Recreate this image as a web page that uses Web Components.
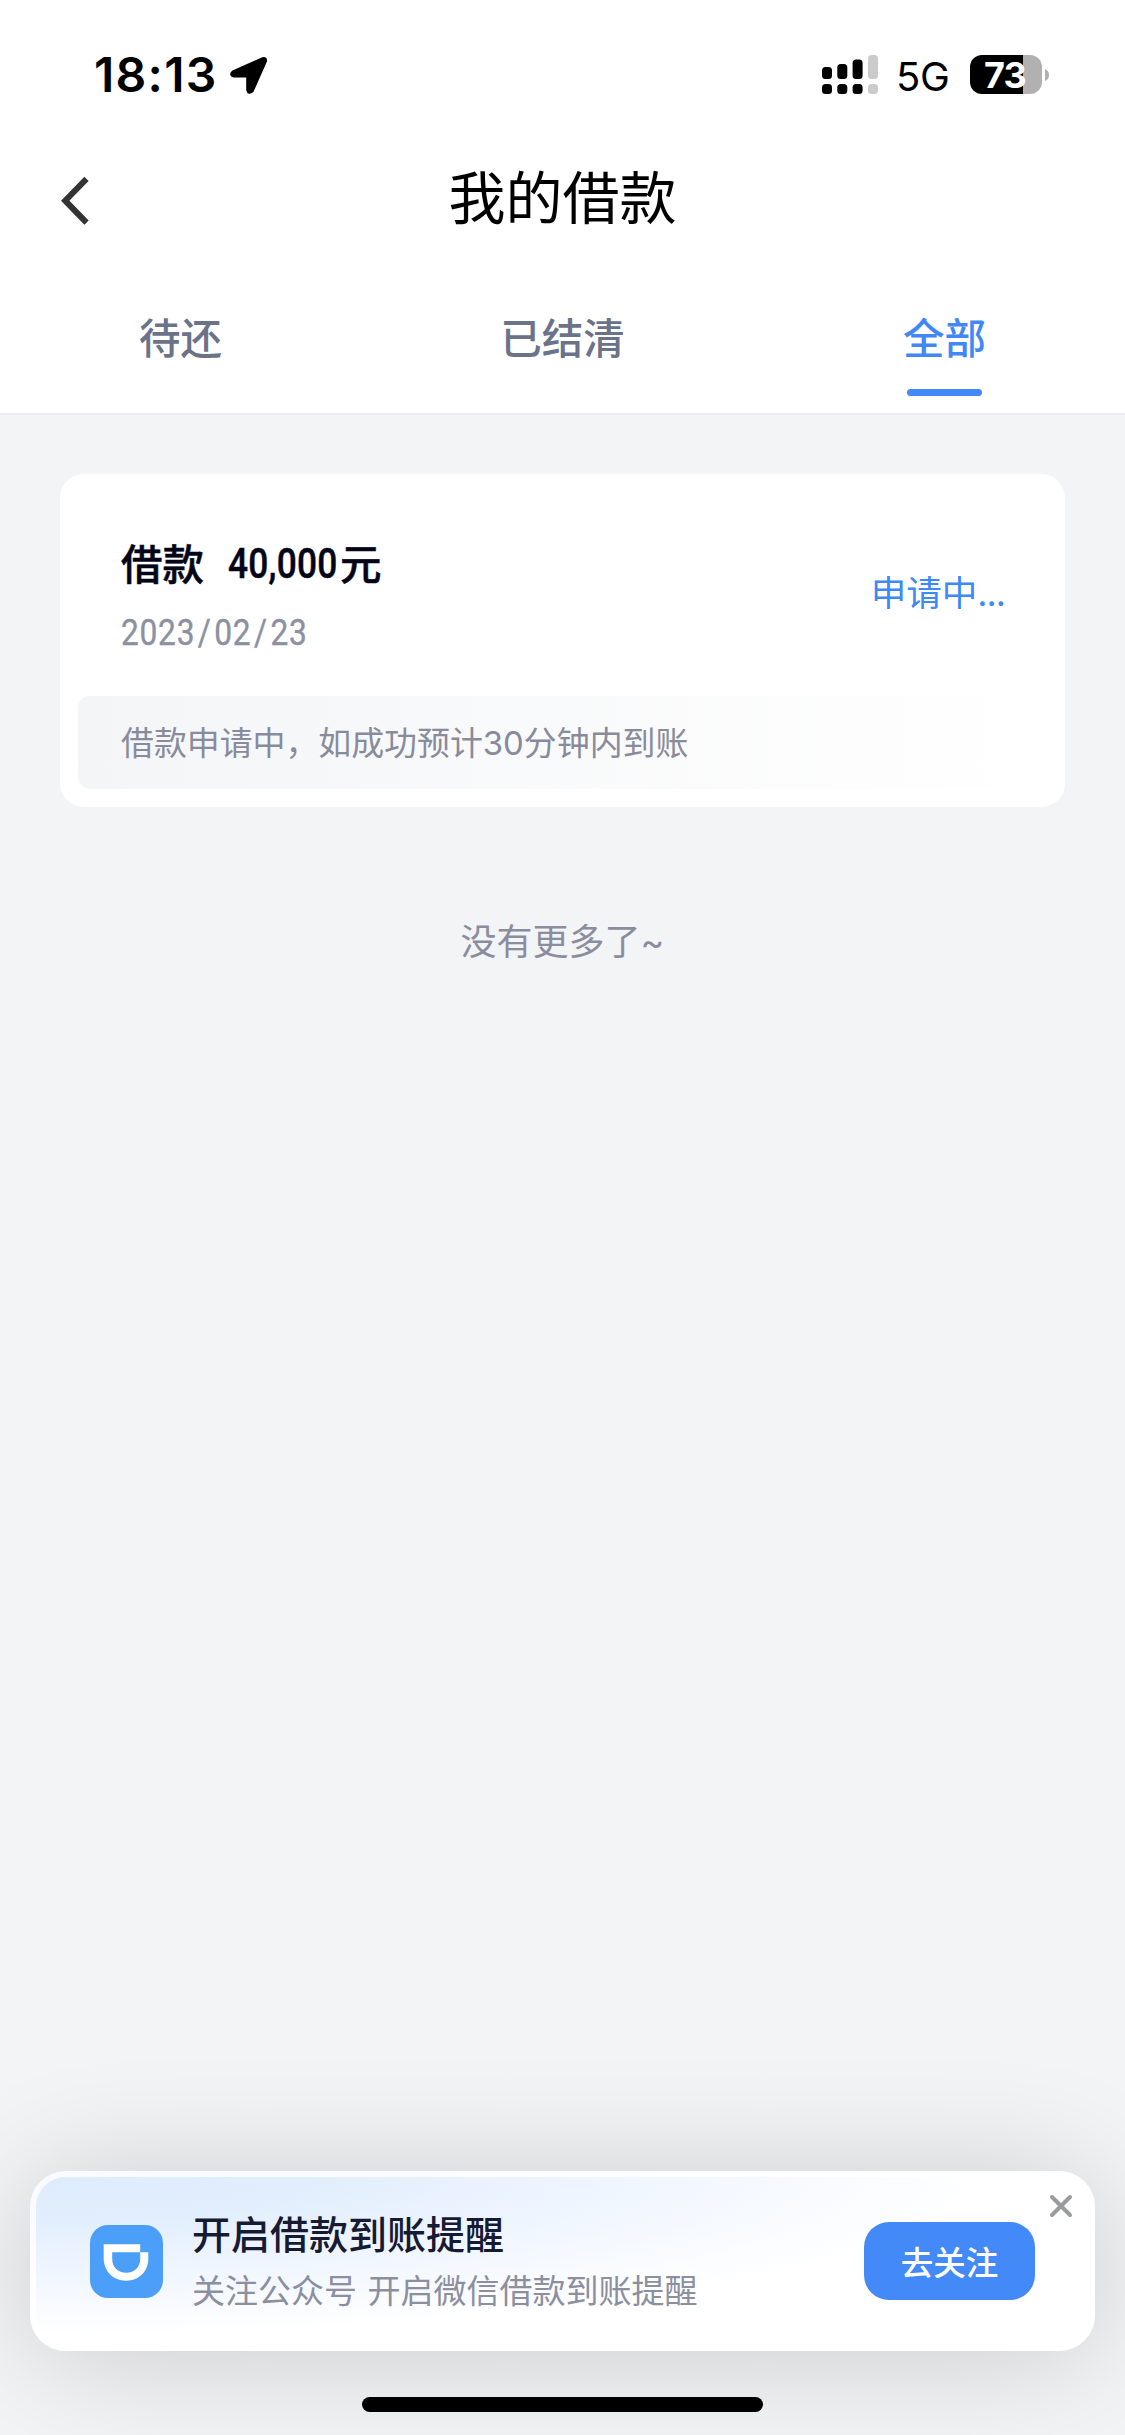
<!DOCTYPE html>
<html lang="zh-CN">
<head>
<meta charset="utf-8">
<title>我的借款</title>
<style>
html,body{margin:0;padding:0}
body{width:1125px;height:2435px;overflow:hidden;background:#f3f4f6;font-family:Inter,"Noto Sans CJK SC",sans-serif}
</style>
</head>
<body>
<loan-page></loan-page>
<script>
const define=(name,html)=>{
  const t=document.createElement('template');t.innerHTML=html;
  customElements.define(name,class extends HTMLElement{
    constructor(){super();this.attachShadow({mode:'open'}).append(t.content.cloneNode(true));}
  });
};

define('status-bar',`<style>
:host{display:flex;height:150px;box-sizing:border-box;padding:0 76px 0 94px;align-items:flex-start;color:#000}
.time{font:600 48px/60px Inter,sans-serif;margin-top:45px;width:136px;letter-spacing:1.3px;white-space:nowrap}
.loc{margin-top:56px}
.sp{flex:1}
.sig{margin-top:55px}
.net{font:400 40px/50px Inter,sans-serif;margin:52px 0 0 17px;width:74px;letter-spacing:-.3px}
.bat{display:flex;align-items:center;gap:3px;margin-top:55px}
.cell{width:72px;height:39px;border-radius:12px;box-sizing:border-box;padding-right:2px;background:linear-gradient(90deg,#000 53px,#b1b1b1 53px);color:#fff;font:700 36px/40px Inter,sans-serif;text-align:center;letter-spacing:-.8px}
</style>
<span class="time">18:13</span>
<svg class="loc" width="38" height="39" viewBox="0 0 38 39"><path d="M3.2 16.4 33 3.1Q35.6 2.4 34.9 5.3L21.8 34.8Q18.8 37.2 18.2 34V19.4H3.6Q.9 18.4 3.2 16.4Z" stroke="#000" stroke-width="4" stroke-linejoin="round"/></svg>
<span class="sp"></span>
<svg class="sig" width="57" height="39" viewBox="0 0 57 39"><g><rect x="0" y="12" width="10" height="12" rx="3.5"/><rect x="15.3" y="9" width="10" height="15" rx="3.5"/><rect x="30.6" y="4.5" width="10" height="19.5" rx="3.5"/><rect x="0" y="29" width="10" height="10" rx="3.5"/><rect x="15.3" y="29" width="10" height="10" rx="3.5"/><rect x="30.6" y="29" width="10" height="10" rx="3.5"/></g><g fill="#cbcbcb"><rect x="46" y="0" width="10" height="24" rx="3.5"/><rect x="46" y="29" width="10" height="10" rx="3.5"/></g></svg>
<span class="net">5G</span>
<span class="bat"><span class="cell">73</span><svg width="4" height="12" viewBox="0 0 4 12"><path d="M0 0Q4 1.5 4 6T0 12Z" fill="#b1b1b1"/></svg></span>`);

define('nav-bar',`<style>
:host{display:grid;grid-template-columns:1fr auto 1fr;height:132px;padding:0 60px;box-sizing:border-box}
svg{margin-top:25px}
h1{margin:2px 0 0;font:400 57px/84px "Noto Sans CJK SC",sans-serif;color:#000}
</style>
<svg width="30" height="52" viewBox="0 0 30 52"><path d="M26.5 3.8 5.2 25.7 26.5 47.6" fill="none" stroke="#333" stroke-width="6"/></svg>
<h1><slot></slot></h1>`);

define('tab-item',`<style>
:host{display:flex;flex-direction:column;align-items:center;font:500 41.5px/60px "Noto Sans CJK SC",sans-serif;color:#6b7389}
i{width:75px;height:7px;border-radius:4px;margin-top:23px}
:host([active]){color:#4188f4}
:host([active]) i{background:#4389f7}
</style><slot></slot><i></i>`);

define('tab-bar',`<style>
:host{display:flex;justify-content:space-around;height:133px;padding-top:24px;box-sizing:border-box;border-bottom:2px solid #ececee}
</style><slot></slot>`);

define('loan-card',`<style>
:host{display:flex;flex-direction:column;height:333px;margin:59px 60px 0;box-sizing:border-box;padding:57px 18px 18px;border-radius:24px;background:#fff}
.main{display:flex;justify-content:space-between;padding:0 42px;height:165px}
.t{display:flex;font:500 41.5px/62px "Noto Sans CJK SC",sans-serif;color:#050518;height:78px;white-space:nowrap;-webkit-text-stroke:.5px #050518;padding-left:1px}
.num{font:500 42px/66px Roboto,sans-serif;display:inline-block;transform:scaleX(.84);transform-origin:0 0;width:112px;margin-left:24px;-webkit-text-stroke:.5px #050518;letter-spacing:.3px}
.date{font:400 36px/48px Roboto,sans-serif;color:#8c91a2;transform:scaleX(.88);transform-origin:0 0;letter-spacing:.9px;white-space:nowrap;-webkit-text-stroke:.4px #8c91a2;padding-left:1px}
.date b{font-weight:400;margin:0 2.9px}
.st{font:400 35.5px/54px Inter,"Noto Sans CJK SC",sans-serif;color:#3c89f8;margin-top:36px;white-space:nowrap}
.st span{letter-spacing:-1px}
.note{height:93px;border-radius:12px;background:linear-gradient(90deg,#f4f5f7,#fff);padding-left:43px;font:400 32.9px/94px Inter,"Noto Sans CJK SC",sans-serif;color:#888b9c;white-space:nowrap}
</style>
<div class="main"><div><div class="t"><span>借款</span><span class="num">40,000</span><span>元</span></div>
<div class="date">2023<b>/</b>02<b>/</b>23</div></div><div class="st">申请中<span>...</span></div></div>
<div class="note">借款申请中，如成功预计30分钟内到账</div>`);

define('list-end',`<style>:host{display:block;margin-top:108px;text-align:center;font:400 36px/54px Inter,"Noto Sans CJK SC",sans-serif;color:#8a8d9e}</style><slot></slot>`);

define('follow-banner',`<style>
:host{display:flex;align-items:center;position:relative;height:180px;margin:0 30px;box-sizing:border-box;padding:0 60px;border-radius:36px;box-shadow:0 6px 120px rgba(0,0,0,.17);
background:radial-gradient(ellipse 960px 165px at 0 0,#dcebfd 0%,#e2eefd 30%,#f0f6ff 62%,rgba(255,255,255,0) 100%),#fff}
:host::before{content:"";position:absolute;inset:0;border:6px solid rgba(255,255,255,.8);border-radius:36px}
.txt{margin-left:29px;flex:1;white-space:nowrap;font-family:"Noto Sans CJK SC",sans-serif}
.a{font-weight:500;font-size:39px;line-height:58px;color:#171a33;margin-top:-5px}
.b{font-size:33px;line-height:50px;color:#8c8fa0;margin-top:3px;word-spacing:3px}
button{width:171px;height:78px;border:0;padding:0;border-radius:25px;background:#4389f7;color:#fff;font:500 32.5px/76px "Noto Sans CJK SC",sans-serif}
.x{position:absolute;right:22.5px;top:23px}
</style>
<svg width="73" height="73" viewBox="0 0 73 73"><rect width="73" height="73" rx="18" fill="#4b9ff9"/><path fill="#fff" fill-rule="evenodd" d="M13.7 19.3H50.2V27.3H58.3V33.5C58.3 46.5 49 55.7 36.2 55.7C23 55.7 13.7 46 13.7 33ZM22.2 27.3V34C22.2 42.2 28 47.7 36.2 47.7C44.4 47.7 50.2 42.2 50.2 34V27.3Z"/></svg>
<div class="txt"><div class="a">开启借款到账提醒</div><div class="b">关注公众号 开启微信借款到账提醒</div></div>
<button>去关注</button>
<svg class="x" width="24" height="24" viewBox="0 0 24 24"><path d="M3 3 21 21M21 3 3 21" stroke="#999b9e" stroke-width="4" stroke-linecap="round"/></svg>`);

define('home-indicator',`<style>:host{display:block;width:401px;height:15px;border-radius:8px;background:#000;margin:46px auto 23px;position:relative}</style>`);

define('loan-page',`<style>
:host{display:flex;flex-direction:column;width:1125px;height:2435px;background:#f3f4f6;overflow:hidden}
header{background:#fff}
.grow{flex:1}
</style>
<header><status-bar></status-bar><nav-bar>我的借款</nav-bar>
<tab-bar><tab-item>待还</tab-item><tab-item>已结清</tab-item><tab-item active>全部</tab-item></tab-bar></header>
<loan-card></loan-card><list-end>没有更多了~</list-end><div class="grow"></div>
<follow-banner></follow-banner><home-indicator></home-indicator>`);
</script>
</body>
</html>
